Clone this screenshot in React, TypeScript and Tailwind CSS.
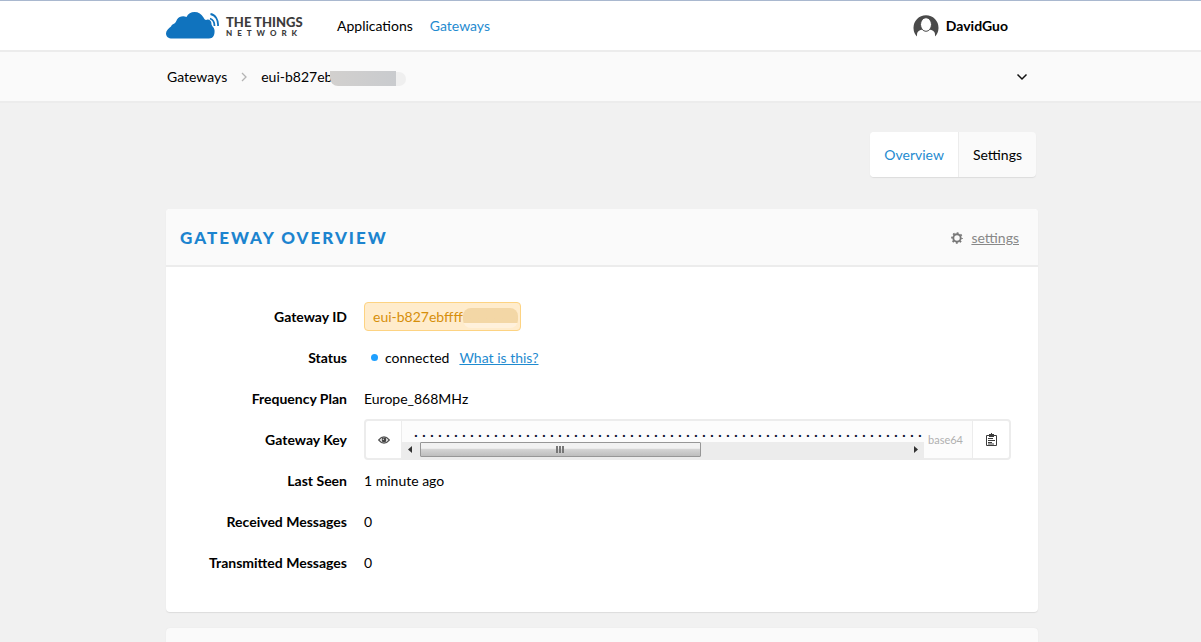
import type { ReactNode } from "react";

const KEY_LENGTH = 64;

const Logo = () => (
  <a href="#" aria-label="The Things Network" className="flex w-[135px] items-center gap-[7px] whitespace-nowrap">
    <svg width="53" height="28" viewBox="0 0 53 28" fill="none" className="shrink-0">
      <path
        d="M6 26.500C2.500 26.500 0 24.500 0 21.500C0 18.500 2.500 16.500 5 14.500C5.500 13.500 6 12.500 7.500 12C9.500 11 10 9.500 11 7.500C13 4.500 17 3.500 20.500 5C22 1.800 25 0 28.500 0C32.500 0 35.500 2 37.500 5.500C38.500 7.500 39.500 8.500 41.500 7.500C44 7.500 45.500 9 45.500 12C45.500 14 48 15 48.500 18C49 23 47 26.500 43 26.500Z"
        fill="#1073be"
      />
      <path d="M44 6.500C47 7.500 48.500 10 48.500 14" stroke="#1073be" strokeWidth="1.800" />
      <path d="M44.500 2C49.500 3 52.500 8 52 14" stroke="#1073be" strokeWidth="1.800" />
    </svg>
    <span className="flex flex-col pt-[3px] text-[#3c3c3c]">
      <span className="text-[13px] leading-[13px] font-black">THE THINGS</span>
      <span className="text-[8px] leading-[9px] font-black tracking-[5px]">NETWORK</span>
    </span>
  </a>
);

const Avatar = () => (
  <svg width="26" height="26" viewBox="0 0 26 26" className="mt-[5px]">
    <path d="M4.500 22A12.500 12.500 0 1 1 21.500 22Z" fill="#4a4a4a" />
    <path d="M4 24V19.500C4 16.500 6.500 15 10 14.500H16C19.500 15 22 16.500 22 19.500V24Z" fill="#fff" />
    <ellipse cx="13" cy="9.500" rx="5.500" ry="6.800" fill="#fff" stroke="#4a4a4a" />
  </svg>
);

const Gear = () => (
  <svg width="12" height="12" viewBox="0 0 12 12" fill="none" stroke="#777">
    <circle cx="6" cy="6" r="3.700" strokeWidth="1.900" />
    <circle cx="6" cy="6" r="5" strokeWidth="1.700" strokeDasharray="1.800 2.127" strokeDashoffset="0.900" />
  </svg>
);

const Eye = () => (
  <svg width="12" height="8" viewBox="0 0 12 8" fill="none">
    <path d="M0.700 4Q6 -2.300 11.300 4Q6 10.300 0.700 4Z" stroke="#555" strokeWidth="1.200" />
    <circle cx="6" cy="4" r="2.400" fill="#444" />
    <path d="M5 4Q5 3 6 3" stroke="#fff" strokeWidth="0.900" />
  </svg>
);

const Clipboard = () => (
  <svg width="11" height="13" viewBox="0 0 11 13" fill="none" stroke="#3c3c3c">
    <path d="M0.500 2.500H10.500V12.500H0.500Z" />
    <path d="M3 1H8V4H3Z" fill="#3c3c3c" stroke="none" />
    <path d="M5 0H6V1H5Z" fill="#3c3c3c" stroke="none" />
    <path d="M2 5.500H7M2 7.500H9M2 9.500H6M2 11H8" />
  </svg>
);

const Row = ({ label, children }: { label: string; children: ReactNode }) => (
  <div className="flex h-[41px] items-center gap-[17px]">
    <dt className="w-[181px] shrink-0 text-right font-bold">{label}</dt>
    <dd className="flex min-w-0 flex-1 items-center">{children}</dd>
  </div>
);

const Scrollbar = () => (
  <div className="flex h-4 items-start bg-[#ececec]">
    <span className="flex h-[15px] w-[18px] items-center justify-center pr-[2px]">
      <svg width="4" height="7" viewBox="0 0 4 7" fill="#333">
        <path d="M4 0V7L0 3.500Z" />
      </svg>
    </span>
    <span className="flex h-[15px] w-[281px] items-center justify-center gap-px rounded-[1px] border border-[#979797] bg-linear-to-b from-[#f2f2f2] from-40% via-[#d4d4d4] via-50% to-[#bebebe] pr-[2px]">
      <i className="h-[7px] w-[2px] bg-[#777]" />
      <i className="h-[7px] w-[2px] bg-[#777]" />
      <i className="h-[7px] w-[2px] bg-[#777]" />
    </span>
    <span className="ml-auto flex h-[15px] w-[18px] items-center justify-center pl-px">
      <svg width="4" height="7" viewBox="0 0 4 7" fill="#333">
        <path d="M0 0V7L4 3.500Z" />
      </svg>
    </span>
  </div>
);

const GatewayKey = () => (
  <div className="mr-[27px] flex h-[41px] min-w-0 flex-1 rounded border-2 border-[#ececec]">
    <button aria-label="Show key" className="flex w-9 shrink-0 items-center justify-center border-r border-[#ececec]">
      <Eye />
    </button>
    <div className="flex min-w-0 flex-1 flex-col justify-between overflow-hidden bg-[#fcfcfc]">
      <div className="flex h-[21px] items-end pl-[10px] leading-5 text-[#0a0a2a]">
        {Array.from({ length: KEY_LENGTH }, (_, i) => (
          <span key={i} className="w-2 shrink-0 text-center font-black">
            .
          </span>
        ))}
      </div>
      <Scrollbar />
    </div>
    <span className="flex w-12 shrink-0 items-center bg-[#fcfcfc] pl-1 text-[11px] text-[#b0b0b0]">base64</span>
    <button aria-label="Copy key" className="flex w-[37px] shrink-0 items-center justify-center border-l border-[#ececec]">
      <Clipboard />
    </button>
  </div>
);

const App = () => {
  return (
    <div className="min-h-screen bg-[#f1f1f1] font-[Lato,sans-serif] text-[14px] leading-5 text-black">
      <header className="border-t border-b-2 border-t-[#a9b8cf] border-b-[#ececec] bg-white pl-[3px]">
        <div className="mx-auto flex h-[49px] max-w-[872px] items-center">
          <Logo />
          <nav className="ml-9 flex gap-[17px]">
            <a href="#">Applications</a>
            <a href="#" className="text-[#1f8bd0]">
              Gateways
            </a>
          </nav>
          <button className="mr-[30px] ml-auto flex items-center gap-[7px] font-bold">
            <Avatar />
            DavidGuo
          </button>
        </div>
      </header>

      <div className="border-b-2 border-[#ececec] bg-[#fafafa] pl-[3px]">
        <div className="mx-auto flex h-[49px] max-w-[872px] items-center pr-[10px] pl-px">
          <a href="#">Gateways</a>
          <svg width="6" height="10" viewBox="0 0 6 10" fill="none" className="mx-[14px]">
            <path d="M1 1L5 5L1 9" stroke="#b4b4b4" strokeWidth="1.300" />
          </svg>
          <span>eui-b827eb</span>
          <span className="mt-1 -ml-[2px] h-[15px] w-[66px] rounded-bl-lg bg-linear-to-r from-[#d2d0ce] to-[#c9cbce]" />
          <span className="mt-1 h-[14px] w-[10px] rounded-r-lg bg-[#efefef]" />
          <button aria-label="Show more" className="ml-auto">
            <svg width="12" height="8" viewBox="0 0 12 8" fill="none">
              <path d="M1.500 1.500L6 6L10.500 1.500" stroke="#111" strokeWidth="1.500" />
            </svg>
          </button>
        </div>
      </div>

      <main className="pl-[3px]">
        <div className="mx-auto max-w-[872px] pt-[29px]">
          <nav className="mr-[2px] ml-auto flex w-fit rounded bg-[#fafafa] shadow-[0_1px_1px_#dcdcdc]">
            <a href="#" className="rounded-l border-r border-[#ececec] bg-white px-[14px] pt-[13px] pb-3 text-[#1f8bd0]">
              Overview
            </a>
            <a href="#" className="px-[14px] pt-[13px] pb-3">
              Settings
            </a>
          </nav>

          <section className="mt-8 rounded bg-white shadow-[0_1px_1px_#dcdcdc]">
            <div className="flex h-[58px] items-center rounded-t border-b-2 border-[#ececec] bg-[#fafafa] pt-[2px] pr-[19px] pl-[14px]">
              <h1 className="text-[17px] font-black tracking-[2px] text-[#1c84cf]">GATEWAY OVERVIEW</h1>
              <a href="#" className="ml-auto flex items-center gap-2 text-[#888]">
                <Gear />
                <span className="underline">settings</span>
              </a>
            </div>
            <dl className="py-[29px]">
              <Row label="Gateway ID">
                <span className="flex h-[29px] items-center rounded border border-[#fdd382] bg-[#ffeccc] pr-[2px] pl-2 text-[#d68f0b]">
                  eui-b827ebffff
                  <span className="mt-[3px] h-[20px] w-[55px] rounded-lg bg-linear-to-b from-[#f3d7a6] from-75% to-[#fff1dc] to-75%" />
                </span>
              </Row>
              <Row label="Status">
                <span className="mr-[7px] ml-[7px] size-[7px] rounded-full bg-[#1fa0ff]" />
                connected
                <a href="#" className="ml-[10px] text-[#1f8bd0] underline">
                  What is this?
                </a>
              </Row>
              <Row label="Frequency Plan">Europe_868MHz</Row>
              <Row label="Gateway Key">
                <GatewayKey />
              </Row>
              <Row label="Last Seen">1 minute ago</Row>
              <Row label="Received Messages">0</Row>
              <Row label="Transmitted Messages">0</Row>
            </dl>
          </section>

          <section className="mt-4 h-[14px] rounded-t bg-[#fafafa] shadow-[0_0_1px_#dcdcdc]" />
        </div>
      </main>
    </div>
  );
};

export default App;
